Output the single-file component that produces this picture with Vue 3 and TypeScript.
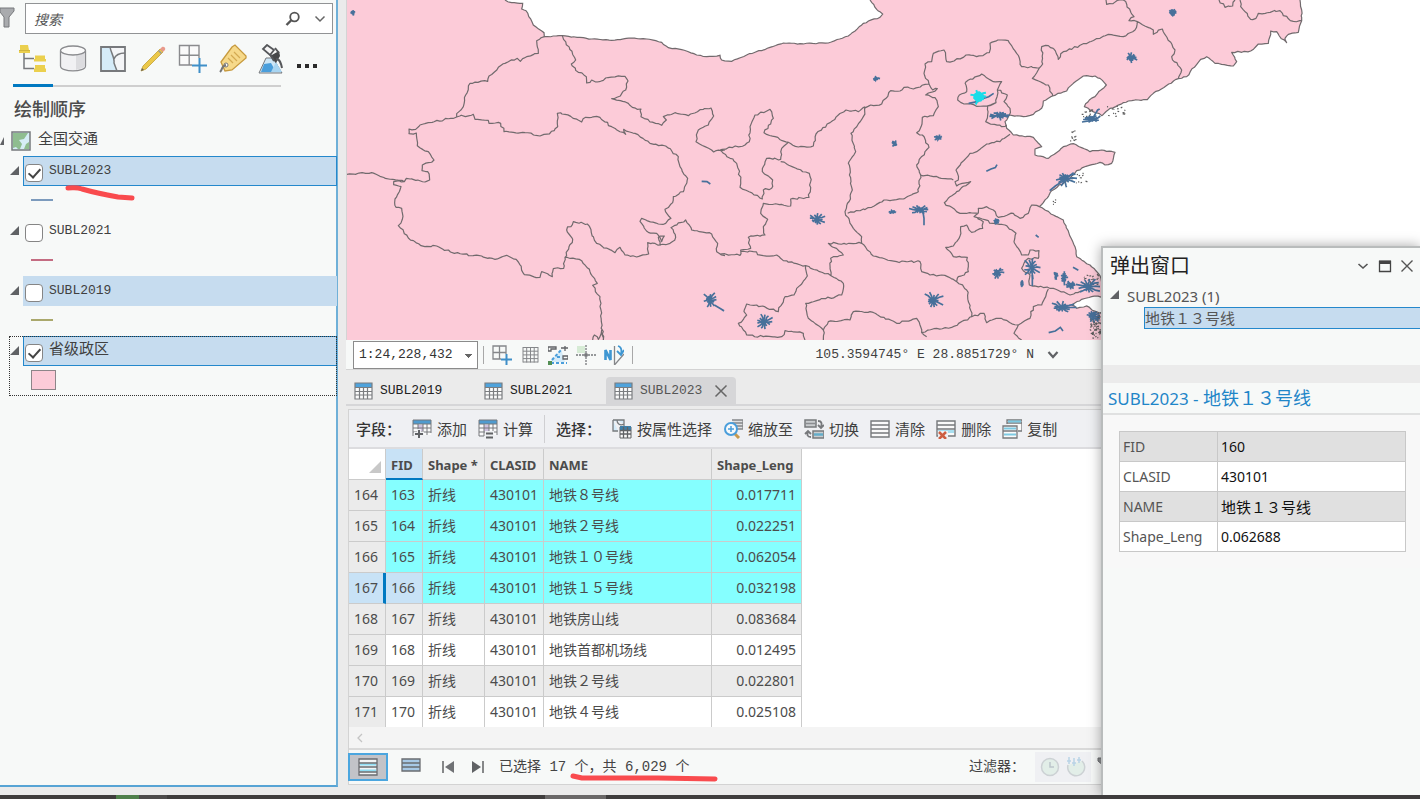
<script setup lang="ts">
import { ref } from 'vue'

interface Layer { name: string; checked: boolean; state: string; color: string; area?: boolean }
interface Row { no: number; fid: number; name: string; len: string; picked: boolean }
interface Border { dx: number; pts: string }
interface City { dx: number; x: number; y: number; w: number; h: number }

const layers = ref<Layer[]>([
  { name: 'SUBL2023', checked: true, state: 'active', color: '#7c9bbd' },
  { name: 'SUBL2021', checked: false, state: '', color: '#c46c82' },
  { name: 'SUBL2019', checked: false, state: 'soft', color: '#aaa86c' },
  { name: '省级政区', checked: true, state: 'active focus', color: '#fccbd8', area: true },
])
const tabs = ['SUBL2019', 'SUBL2021', 'SUBL2023']
const rows: Row[] = [
  { no: 164, fid: 163, name: '地铁８号线', len: '0.017711', picked: true },
  { no: 165, fid: 164, name: '地铁２号线', len: '0.022251', picked: true },
  { no: 166, fid: 165, name: '地铁１０号线', len: '0.062054', picked: true },
  { no: 167, fid: 166, name: '地铁１５号线', len: '0.032198', picked: true },
  { no: 168, fid: 167, name: '地铁房山线', len: '0.083684', picked: false },
  { no: 169, fid: 168, name: '地铁首都机场线', len: '0.012495', picked: false },
  { no: 170, fid: 169, name: '地铁２号线', len: '0.022801', picked: false },
  { no: 171, fid: 170, name: '地铁４号线', len: '0.025108', picked: false },
]
const current = 167
const attributes = [
  ['FID', '160'],
  ['CLASID', '430101'],
  ['NAME', '地铁１３号线'],
  ['Shape_Leng', '0.062688'],
]

// Map units are a third of a pixel. Each sheet of the map has its own x origin.
const WEST = -6
const MID = 1119
const EAST = 2079

let seed = 7
function rand(): number {
  seed = (seed * 16807) % 2147483647
  return seed / 2147483647 - 0.5
}
function rough(pts: string, amp: number, dx: number): string {
  const p = pts.trim().split(/\s+/).map((s) => s.split(',').map(Number))
  const out = [`M${p[0][0] + dx} ${p[0][1]}`]
  for (let i = 1; i < p.length; i++) {
    const [x0, y0] = p[i - 1]
    const [x1, y1] = p[i]
    const n = Math.max(1, Math.round(Math.hypot(x1 - x0, y1 - y0) / 9))
    for (let k = 1; k < n; k++) {
      const t = k / n
      out.push(`L${(x0 + (x1 - x0) * t + dx + rand() * amp).toFixed(1)} ${(y0 + (y1 - y0) * t + rand() * amp).toFixed(1)}`)
    }
    out.push(`L${x1 + dx} ${y1}`)
  }
  return out.join('')
}
function burst(c: City): string {
  const out: string[] = []
  for (let i = 0; i < 13; i++) {
    const a = (i / 13) * Math.PI * 2
    const r = 1.15 + rand() * 0.9
    const x = c.x + c.dx
    out.push(`M${x + rand() * 6} ${c.y + rand() * 6}L${x + Math.cos(a) * r * c.w * 0.3} ${c.y + Math.sin(a) * r * c.h * 0.35 + rand() * 5}L${x + Math.cos(a) * r * c.w * 0.5} ${c.y + Math.sin(a) * r * c.h * 0.5}`)
  }
  return out.join('')
}
function specks(x: number, y: number, w: number, h: number, n: number): string {
  const out: string[] = []
  for (let i = 0; i < n; i++) out.push(`M${x + (rand() + 0.5) * w} ${y + (rand() + 0.5) * h}l${4 + rand() * 4} ${rand() * 6}`)
  return out.join('')
}

const north = rough('480,0 500,8 533,10 530,27 543,32 565,75 597,98 598,110 652,107 740,117 800,121 860,114 905,117 950,127 970,143 1010,149 1055,165 1085,170 1125,166 1130,180 1160,184 1205,165 1275,142 1315,129 1365,131 1450,129 1510,108 1555,70 1605,52 1613,42 1595,28 1575,0', 3, WEST)
const sea = rough('1740,0 1745,30 1745,62 1735,97 1705,103 1695,115 1700,128 1678,108 1670,95 1652,93 1645,130 1615,132 1592,153 1535,157 1550,185 1540,198 1485,190 1460,170 1442,178 1400,230 1375,236 1300,280 1282,299 1225,303 1170,325 1145,347 1110,330 1093,320 1108,300 1125,290 1159,255 1140,235 1125,228 1090,228 1060,250 1040,273 998,288 970,303 965,325 940,343 910,350 868,345 855,365 860,385 880,405 940,412 965,440 945,447 945,465 985,475 1003,463 1030,440 1060,431 1110,455 1145,450 1185,457 1175,490 1155,495 1140,487 1105,497 1070,512 1050,535 995,572 970,608 958,620 1000,645 1030,660 1065,740 1070,770 1110,795 1135,820 1150,850', 4, MID)
const bay = rough('1150,890 1115,890 1085,898 1055,915 1070,925 1100,918 1120,932 1150,940', 4, MID)

const borders: Border[] = [
  { dx: WEST, pts: '598,110 575,122 580,160 545,170 526,184 517,175 490,185 460,202 432,228 428,244 375,250 362,285 355,320 335,341 335,351' },
  { dx: WEST, pts: '652,107 692,180 679,192 700,217 724,230 725,249 740,240 752,246 775,241 782,234 840,229 849,243 842,270 826,288 800,296 850,310 862,322 888,327 888,350 915,366 950,376 964,360 955,350 990,338 1030,347 1065,329 1098,324 1106,348 1090,375 1060,390 1053,425 1080,440 1106,456 1140,450' },
  { dx: WEST, pts: '335,351 385,343 390,358 430,361 432,370 467,370 477,395 540,398 585,408 613,402 638,380 637,340 660,343 710,366 722,352 755,349 800,380 842,403 836,388 870,400 915,430 962,438 1000,470 1005,500 1028,535 1015,575 985,590 983,608 960,628 978,655 962,670 940,672 890,655 885,664 910,697 935,700 950,725 958,708 940,712 945,735 975,730 992,712 978,683 1022,660 1040,690 1100,702 1118,730 1115,755 1140,767' },
  { dx: WEST, pts: '335,351 225,375 212,388 192,387 192,401 214,399 217,437 250,455 267,480 232,495 231,512 248,515 254,540 240,546 184,535 178,545 146,545 146,554 168,560 150,597 153,622 170,625 172,658 160,677 190,714 228,737 275,738 328,760 410,768 450,778 485,766 520,786 538,824 585,832 590,815 622,830 625,806 656,805 660,772 672,740 683,718 665,690 685,665 727,672 755,730 810,758 825,742 840,765 875,771 911,762 908,728 948,735' },
  { dx: WEST, pts: '6,523 80,518 105,529 178,545' },
  { dx: WEST, pts: '660,772 710,782 735,815 757,850 743,856 765,890 769,965 775,1020' },
  { dx: WEST, pts: '743,1020 748,1005 760,1018 770,990 775,1020' },
  { dx: MID, pts: '0,450 75,435 88,425 90,380 105,345 150,328 160,355 132,398 205,427 185,445 182,478 140,475 127,515 158,540 155,565 130,570 127,597 60,562 62,540 50,490 10,460 0,450' },
  { dx: MID, pts: '182,485 268,520 272,545 267,592 212,597 212,618 130,610 122,640 143,658 130,680 135,705 85,712 92,745 62,750 60,766 0,762' },
  { dx: MID, pts: '205,427 235,441 280,438 288,402 355,345 378,330 415,335 435,320' },
  { dx: MID, pts: '435,320 430,350 393,400 407,455 385,490 397,570 375,635 400,685 425,710 425,730' },
  { dx: MID, pts: '432,325 452,315 485,312 512,272 540,273 552,262 580,267 627,252 612,220 615,192 635,185 640,160 672,150 680,185 702,183 738,165 770,170 808,158 810,130 845,120 865,122 890,160 905,200 958,204 968,192 965,140 985,137 1000,145' },
  { dx: MID, pts: '627,252 638,270 652,266 617,285 645,293 655,320 640,347 607,352 606,372 590,398 607,405 627,442 590,495 602,525 640,530 700,540' },
  { dx: MID, pts: '870,403 840,425 800,432 770,455 750,460 708,510 715,540 705,545 710,558 752,545 710,575 690,590 673,608 720,640 775,640' },
  { dx: MID, pts: '602,525 595,575 550,597 492,600 455,622 383,640' },
  { dx: MID, pts: '958,204 937,235 985,255 998,288' },
  { dx: MID, pts: '735,248 785,222 820,245 845,245 832,270 828,308 790,318 732,312 713,300 718,285 740,275 735,248' },
  { dx: MID, pts: '832,270 862,285 852,305 870,325 868,345' },
  { dx: MID, pts: '828,308 803,318 803,345 797,365 845,380 860,375' },
  { dx: MID, pts: '775,640 775,625 800,620 820,630 835,652 880,640 900,655 925,640 935,615 958,620' },
  { dx: MID, pts: '775,640 762,650 820,670 855,675 888,700 882,725 895,745 905,765 925,765 930,750 957,752 955,775 925,775 905,805 930,825 928,855 1000,865 1050,885 1085,872' },
  { dx: MID, pts: '762,650 790,665 788,685 755,697 740,675 722,680 720,708 700,738 677,742 700,770 742,772 745,815 715,830 710,845 740,870 755,950' },
  { dx: MID, pts: '425,730 325,730 370,765 332,775 333,827 370,850 365,885 290,902 257,910 265,955 310,990 310,1020' },
  { dx: MID, pts: '425,730 460,768 530,785 600,785 605,815 630,825 665,825 710,845' },
  { dx: MID, pts: '62,755 100,755 130,767 170,765 190,782 257,797 333,827' },
  { dx: MID, pts: '257,797 262,828 230,865 222,885 195,890 175,935 110,915 80,912 72,935 80,945 55,970 70,990 80,1005 130,1010 185,1010 195,992 250,1000 255,1020' },
  { dx: MID, pts: '310,990 325,965 390,960 400,935 450,935 530,970 590,955 600,975 605,998 620,1010' },
  { dx: MID, pts: '605,998 650,985 695,982 755,950 792,940 800,968 835,955 895,975 930,955 940,920 965,915 985,867' },
  { dx: MID, pts: '895,975 882,1000 905,1020' },
  { dx: EAST, pts: '40,145 55,178 70,155 180,115 205,103 250,110 285,90 292,65 340,90 340,103 367,87 405,150 395,170 425,210 415,236' },
  { dx: EAST, pts: '198,0 200,13 250,0 282,50 267,62 292,65' },
  { dx: EAST, pts: '537,0 555,22 578,18 585,0' },
  { dx: EAST, pts: '600,0 602,20 632,58 648,55 655,40 720,32 730,47 760,64 785,62' },
]
const borderPath = borders.map((b) => rough(b.pts, 6, b.dx)).join('')

const cities: City[] = [
  { dx: WEST, x: 23, y: 38, w: 11, h: 10 },
  { dx: WEST, x: 1095, y: 899, w: 32, h: 32 },
  { dx: MID, x: 468, y: 236, w: 16, h: 8 },
  { dx: MID, x: 524, y: 431, w: 13, h: 12 },
  { dx: MID, x: 654, y: 413, w: 17, h: 12 },
  { dx: MID, x: 838, y: 346, w: 46, h: 20 },
  { dx: MID, x: 290, y: 658, w: 38, h: 27 },
  { dx: MID, x: 516, y: 636, w: 16, h: 8 },
  { dx: MID, x: 598, y: 629, w: 42, h: 20 },
  { dx: MID, x: 832, y: 818, w: 26, h: 24 },
  { dx: MID, x: 935, y: 803, w: 38, h: 44 },
  { dx: MID, x: 640, y: 902, w: 44, h: 38 },
  { dx: MID, x: 132, y: 965, w: 40, h: 36 },
  { dx: MID, x: 828, y: 664, w: 14, h: 10 },
  { dx: MID, x: 1008, y: 826, w: 10, h: 18 },
  { dx: MID, x: 1032, y: 832, w: 16, h: 32 },
  { dx: MID, x: 1050, y: 855, w: 26, h: 18 },
  { dx: MID, x: 1105, y: 860, w: 52, h: 38 },
  { dx: MID, x: 1025, y: 922, w: 56, h: 26 },
  { dx: MID, x: 1120, y: 948, w: 34, h: 26 },
  { dx: MID, x: 1035, y: 535, w: 46, h: 34 },
  { dx: MID, x: 906, y: 851, w: 8, h: 14 },
  { dx: EAST, x: 397, y: 38, w: 20, h: 16 },
  { dx: EAST, x: 272, y: 173, w: 30, h: 20 },
  { dx: EAST, x: 155, y: 356, w: 34, h: 14 },
]
const cityPath = cities.map(burst).join('')
const capital = burst({ dx: MID, x: 776, y: 290, w: 32, h: 32 })
const islands = specks(EAST + 200, 320, 55, 30, 16) + specks(EAST + 90, 390, 18, 35, 10) + specks(MID + 1085, 330, 40, 30, 16)
  + specks(MID + 1050, 515, 60, 40, 12) + specks(MID + 995, 600, 12, 16, 4) + specks(MID + 1108, 935, 34, 80, 80) + specks(MID + 1085, 815, 50, 40, 22)
</script>

<template>
  <div class="app">
    <div class="workspace">
      <aside class="contents">
        <div class="search-row">
          <svg class="funnel" width="18" height="22" viewBox="0 0 18 22"><path d="M0 1H14V4L9 10V20H4V10L0 5Z" fill="#a9abae" stroke="#77797c" /></svg>
          <div class="search">
            <input type="text" placeholder="搜索" aria-label="搜索" />
            <button aria-label="查找"><svg width="16" height="16" viewBox="0 0 16 16" fill="none" stroke="#555"><circle cx="9.500" cy="6" r="4.300" stroke-width="1.800" /><path d="M6.500 9L1.500 14" stroke-width="2.400" /></svg></button>
            <button aria-label="搜索选项"><svg width="12" height="8" viewBox="0 0 12 8" fill="none" stroke="#666" stroke-width="1.500"><path d="M1.500 1.500L6 6L10.500 1.500" /></svg></button>
          </div>
        </div>

        <div class="views">
          <nav class="view-list" aria-label="列出方式">
            <button class="on" aria-label="按绘制顺序列出"><svg width="30" height="30" viewBox="0 0 30 30"><path d="M6 9V24.500H16M6 14.500H16" fill="none" stroke="#77797c" stroke-width="1.500" /><path d="M2 1H10L11 6H12V9H1V6H2ZM17 11.500H27V15H28V17.500H16V15H17ZM17 21H27V24.500H28V28H16V24.500H17Z" fill="#ebd04e" /><path d="M1 6.500H12" stroke="#d0b53d" /></svg></button>
            <button aria-label="按数据源列出"><svg width="30" height="30" viewBox="0 0 30 30"><path d="M2.500 7V22C2.500 28.500 27.500 28.500 27.500 22V7" fill="#f1f1f3" stroke="#8a8b8e" stroke-width="1.300" /><path d="M18 11L27 8V23L18 26Z" fill="#dcdcdf" /><ellipse cx="15" cy="6.500" rx="12.500" ry="4.500" fill="#fafafa" stroke="#8a8b8e" stroke-width="1.300" /></svg></button>
            <button aria-label="按选择列出"><svg width="30" height="30" viewBox="0 0 30 30"><path d="M3 3H27V27H3Z" fill="#f4f5f7" /><path d="M3 3H12C13 9 17 14 16 19L19 27H3Z" fill="#d5ebf8" /><path d="M12 3C13 9 17 14 16 19L19 27M16 15C18 10 22 9 27 9" fill="none" stroke="#77797c" stroke-width="1.500" /><path d="M3 3H27V27H3Z" fill="none" stroke="#77797c" stroke-width="1.800" /></svg></button>
            <button aria-label="按编辑列出"><svg width="30" height="30" viewBox="0 0 30 30"><path d="M3 27L5 22L22 5L25 8L8 25Z" fill="#ebc84a" stroke="#c39f35" stroke-width=".8" /><path d="M22 5L24 3C26 2 28 4 27 6L25 8Z" fill="#e99a8c" /><path d="M20.500 6.500L23.500 9.500" stroke="#999" stroke-width="1.500" /><path d="M3 27L4 24L6 26Z" fill="#67645c" /></svg></button>
            <button aria-label="按捕捉列出"><svg width="30" height="30" viewBox="0 0 30 30"><path d="M1.500 1.500H21V21H1.500ZM11.200 1.500V21M1.500 11.200H21" fill="#fafafa" stroke="#8a8b8e" stroke-width="1.400" /><path d="M21.500 14V29M14 21.500H29" stroke="#f7f9f8" stroke-width="5" /><path d="M21.500 14V29M14 21.500H29" stroke="#3f8fc8" stroke-width="2" /></svg></button>
            <button aria-label="按标注列出"><svg width="30" height="30" viewBox="0 0 30 30"><path d="M3 18L14 3L17 1L28 12V14L14 26L7 27Z" fill="#f6d98a" stroke="#c79a3e" stroke-width="1.300" /><path d="M13 11L19 17M16 8L22 14M10 14L15 19" stroke="#d3aa52" stroke-width="1.200" /><circle cx="8" cy="21" r="2" fill="#fff" stroke="#777" /><path d="M8 21C3 22 5 25 2 28" fill="none" stroke="#777" stroke-width="2" /></svg></button>
            <button aria-label="按感知列出"><svg width="30" height="30" viewBox="0 0 30 30"><path d="M8 14L1 29H24L15 14Z" fill="#cde6f6" stroke="#77797c" /><path d="M6 20L3 28H18L13 19Z" fill="#4a9edb" /><path d="M13 28L18 18L24 28Z" fill="#a8d5f2" /><path d="M9 1L16 6L12 11L5 5Z" fill="#f6f6f6" stroke="#55575a" stroke-width="1.800" /><path d="M12 12L21 7L22 12L18 19Z" fill="#46484a" /><path d="M17 4L21 9M12 10L16 17M18 15C22 15 23 19 24 24" fill="none" stroke="#55575a" stroke-width="2" /></svg></button>
          </nav>
          <button class="more" aria-label="更多"><i></i><i></i><i></i></button>
        </div>

        <h1>绘制顺序</h1>
        <div class="map-row">
          <span class="tri"></span>
          <svg width="20" height="20" viewBox="0 0 20 20"><path d="M1 1H19V19H1Z" fill="#d6edf6" stroke="#77797c" stroke-width="1.500" /><path d="M2 2H17L13 8L8 9L11 13L9 18H7L5 16L2 17ZM18 11V18H13L15 13Z" fill="#8fbd90" /></svg>
          <span>全国交通</span>
        </div>
        <ul class="layers">
          <li v-for="(l, i) in layers" :key="l.name" :class="l.state">
            <span class="tri"></span>
            <div class="layer-row">
              <input :id="'layer' + i" v-model="l.checked" type="checkbox" />
              <label :for="'layer' + i">{{ l.name }}</label>
            </div>
            <div class="legend"><span :class="l.area ? 'swatch' : 'stroke'" :style="{ background: l.color }"></span></div>
          </li>
        </ul>
        <svg class="mark mark-layer" width="72" height="18" viewBox="0 0 72 18"><path d="M4 4C10 4 12 3 18 5C32 9 43 11 54 13L68 14" /></svg>
      </aside>

      <main class="stage">
        <svg class="map" viewBox="0 0 3219 1020" preserveAspectRatio="xMinYMin slice" role="img" aria-label="地图">
          <rect width="3219" height="1020" fill="#fccbd8" />
          <path :d="north" class="void" />
          <path :d="sea + 'L3400 1020V-10H2859Z'" fill="#fff" />
          <path :d="sea" class="line" />
          <path :d="bay" class="void" />
          <path :d="borderPath" class="line" />
          <path :d="islands" class="speck" />
          <path :d="cityPath" class="metro" />
          <path class="metro" d="M1727 630L1731 655V676M2108 572L2125 558L2145 545L2180 518M2105 998L2125 993L2140 982L2148 993M1119 925L1131 933M1102 915L1131 932M2205 366L2245 360L2260 348M2240 350L2252 330L2258 327M1865 310L1895 304M1902 298L1925 290L1940 280M1918 514L1932 507L1945 503L1950 494M2066 705L2075 712M2056 825V858M2178 802L2194 811M1064 544L1080 545L1090 552M1955 352L1988 345" />
          <path :d="capital" class="capital" />
          <ellipse cx="1895" cy="290" rx="16" ry="15" fill="#19dce8" />
        </svg>

        <div class="statusbar">
          <select aria-label="比例尺"><option>1:24,228,432</option></select>
          <span class="sep"></span>
          <button aria-label="捕捉格网"><svg width="20" height="20" viewBox="0 0 20 20"><path d="M1 1H14V14H1ZM7.500 1V14M1 7.500H14" fill="none" stroke="#85878a" stroke-width="1.300" /><path d="M14.500 9V20M9 14.500H20" stroke="#f7f9f8" stroke-width="4" /><path d="M14.500 9V20M9 14.500H20" stroke="#3f8fc8" stroke-width="2" /></svg></button>
          <button aria-label="格网"><svg width="20" height="20" viewBox="0 0 20 20"><path d="M3 2.500H18M3 6.200H18M3 9.900H18M3 13.600H18M3 17H18M3 2V17.500M6.700 2V17.500M10.500 2V17.500M14.200 2V17.500M18 2V17.500" stroke="#85878a" fill="none" /></svg></button>
          <button aria-label="约束"><svg width="20" height="20" viewBox="0 0 20 20"><path d="M2 17L13 4L17 17Z" fill="#d5ebf8" /><path d="M0 2H8V4H3V6H0ZM13 3H20M17 1V6M15 11H20V14H15Z" stroke="#606265" stroke-width="1.300" fill="none" /><path d="M3 18H19M4 15L13 5M9 12H14" stroke="#4a9edb" stroke-width="2" stroke-dasharray="3 2" fill="none" /><path d="M0 16H4V20H0Z" fill="#538f54" /></svg></button>
          <button aria-label="校正"><svg width="20" height="20" viewBox="0 0 20 20"><path d="M1 1H9V8H1Z" fill="#d6ebd5" /><path d="M10 0V20M0 10H20" stroke="#77797c" stroke-width="1.300" stroke-dasharray="2 1" /><circle cx="10" cy="10" r="2" fill="#77797c" /></svg></button>
          <button aria-label="指北"><svg width="20" height="20" viewBox="0 0 20 20"><path d="M1.500 15V5L6.500 15V5" fill="none" stroke="#3f97d2" stroke-width="2.600" /><path d="M10.500 1V20L20 9" fill="none" stroke="#85878a" stroke-width="1.300" /><path d="M14 1C17 2 18 5 17 9M13 6L17 10L20 5" fill="none" stroke="#3f97d2" stroke-width="1.800" /></svg></button>
          <span class="sep"></span>
          <output class="coords">105.3594745° E 28.8851729° N</output>
          <button aria-label="坐标格式"><svg width="12" height="10" viewBox="0 0 12 10"><path d="M1.500 2L6 7L10.500 2" fill="none" stroke="#606265" stroke-width="2.200" /></svg></button>
        </div>

        <div class="tabs" role="tablist">
          <div v-for="t in tabs" :key="t" class="tab" :class="{ current: t === 'SUBL2023' }">
            <button class="tab-name" role="tab" :aria-selected="t === 'SUBL2023'">
              <svg width="19" height="18" viewBox="0 0 19 18"><path d="M1 1H18V17H1Z" fill="#fbfbfb" /><path d="M1 1H18V5H1Z" fill="#4fa3dc" /><path d="M1 5.500H18M1 9.500H18M1 13H18M5.500 5V17M9.500 5V17M13.500 5V17M1 1H18V17H1Z" stroke="#7b7d80" stroke-width="1.200" fill="none" /></svg>
              <span>{{ t }}</span>
            </button>
            <button v-if="t === 'SUBL2023'" class="close" aria-label="关闭"><svg width="14" height="14" viewBox="0 0 14 14"><path d="M1.500 1.500L12.500 12.500M12.500 1.500L1.500 12.500" stroke="#666" stroke-width="1.500" /></svg></button>
          </div>
        </div>

        <section class="table-view">
          <div class="toolbar">
            <strong>字段：</strong>
            <button><svg width="20" height="20" viewBox="0 0 20 20"><path d="M1 2H19V16H1Z" fill="#fafafa" /><path d="M1 1H19V5H1Z" fill="#4f9bcf" /><path d="M6 6H11V12H6Z" fill="#cfc1df" /><path d="M1 1V17M1 1H19V14M1 9H19M1 13H19M6 5V17M11 5V12M15 5V16M1 5H19" stroke="#77797c" fill="none" /><path d="M7 10V20M2 15H12" stroke="#eff0f3" stroke-width="4" /><path d="M7 11V19M3 15H11" stroke="#606265" stroke-width="2" /></svg><span>添加</span></button>
            <button><svg width="20" height="20" viewBox="0 0 20 20"><path d="M1 2H19V16H1Z" fill="#fafafa" /><path d="M1 1H19V5H1Z" fill="#4f9bcf" /><path d="M6 6H11V12H6Z" fill="#cfc1df" /><path d="M1 1V17H6M1 1H19V16M1 9H19M1 13H19M6 5V17M11 5V12M15 5V16M1 5H19" stroke="#77797c" fill="none" /><path d="M7 12H16V20H7Z" fill="#eff0f3" /><path d="M8 14.500H15M8 18.500H15" stroke="#606265" stroke-width="2" /></svg><span>计算</span></button>
            <span class="rule"></span>
            <strong>选择：</strong>
            <button><svg width="20" height="20" viewBox="0 0 20 20"><path d="M1 1H12V7M1 1V12H6M5 1C5 5 8 7 12 5" fill="#d5ebf8" stroke="#77797c" stroke-width="1.300" /><path d="M8 8H19V19H8Z" fill="#fafafa" stroke="#606265" /><path d="M8 7H19V11H8Z" fill="#3f7fa8" /><path d="M8 11.500H19M8 15H19M11.500 8V19M15.500 8V19" stroke="#606265" stroke-width="1.300" /></svg><span>按属性选择</span></button>
            <button><svg width="20" height="20" viewBox="0 0 20 20"><path d="M9 1H20V10H12M9 4H20M12 7H20" fill="#dfe1e3" stroke="#85878a" stroke-width="1.300" /><path d="M12 15L16 19" stroke="#c79a4e" stroke-width="3" /><circle cx="8" cy="10" r="6" fill="#f7f9fa" stroke="#4a9edb" stroke-width="2" /><path d="M8 7V13M5 10H11" stroke="#4a9edb" stroke-width="1.500" /></svg><span>缩放至</span></button>
            <button><svg width="20" height="20" viewBox="0 0 20 20"><path d="M1 1H12V8H1ZM9 12H20V19H9Z" fill="#c9ccce" stroke="#77797c" stroke-width="1.500" /><path d="M2 4.500H11" stroke="#8b8d90" stroke-width="1.500" /><path d="M10 15.500H19" stroke="#63aeca" stroke-width="2.500" /><path d="M14 2C18 2 18 5 17 8M14 6L17 9L20 6M7 18C3 18 3 16 4 12M1 15L4 12L7 15" fill="none" stroke="#77797c" stroke-width="1.800" /></svg><span>切换</span></button>
            <button><svg width="20" height="20" viewBox="0 0 20 20"><path d="M1 2H19V18H1ZM1 6H19M1 10H19M1 14H19" fill="#fafafa" stroke="#77797c" stroke-width="1.400" /></svg><span>清除</span></button>
            <button><svg width="20" height="20" viewBox="0 0 20 20"><path d="M1 2H19V17H1ZM1 6H19M1 10H19" fill="#fafafa" stroke="#77797c" stroke-width="1.400" /><path d="M2 11H18V14H2Z" fill="#a8dff0" /><path d="M2 12H12V20H2Z" fill="#eff0f3" /><path d="M3 13L10 20M10 13L3 20" stroke="#cd5f42" stroke-width="2.500" /></svg><span>删除</span></button>
            <button><svg width="20" height="20" viewBox="0 0 20 20"><path d="M5 5V1H20V12H16M5 4H20" fill="#fafafa" stroke="#77797c" stroke-width="1.300" /><path d="M1 7H15V19H1Z" fill="#fafafa" stroke="#77797c" stroke-width="1.300" /><path d="M6 2.500H19M2 9.500H14M2 15.500H14" stroke="#7cc9e2" stroke-width="2" /><path d="M1 12H15" stroke="#77797c" stroke-width="1.500" /></svg><span>复制</span></button>
          </div>

          <div class="grid-wrap">
            <table class="grid">
              <colgroup><col class="c-no" /><col class="c-fid" /><col class="c-shape" /><col class="c-cls" /><col class="c-name" /><col class="c-len" /></colgroup>
              <thead>
                <tr>
                  <th class="corner" aria-label="全选"><span></span></th>
                  <th class="sorted">FID</th><th>Shape *</th><th>CLASID</th><th>NAME</th><th>Shape_Leng</th>
                </tr>
              </thead>
              <tbody>
                <tr v-for="r in rows" :key="r.no" :class="{ picked: r.picked, current: r.no === current }">
                  <th scope="row">{{ r.no }}</th>
                  <td>{{ r.fid }}</td><td>折线</td><td>430101</td><td>{{ r.name }}</td><td class="num">{{ r.len }}</td>
                </tr>
              </tbody>
            </table>
          </div>
          <div class="hscroll"><button aria-label="向左滚动"><svg width="8" height="10" viewBox="0 0 8 10"><path d="M6 1L2 5L6 9" fill="none" stroke="#c4c4c4" stroke-width="1.300" /></svg></button></div>

          <div class="footer">
            <button class="mode on" aria-label="显示所有记录"><svg width="20" height="18" viewBox="0 0 20 18"><path d="M1 1H19V17H1Z" fill="#f2f4f5" /><path d="M2 6.500H18M2 12.500H18" stroke="#8edcf2" stroke-width="2" /><path d="M1 1H19V17H1ZM1 5H19M1 9H19M1 14H19" fill="none" stroke="#6a6c70" stroke-width="1.300" /></svg></button>
            <button class="mode" aria-label="显示所选记录"><svg width="20" height="18" viewBox="0 0 20 18"><path d="M1 1H19V13H1Z" fill="#a7c8e6" /><path d="M1 1H19V13H1ZM1 5H19M1 9H19" fill="none" stroke="#6a6c70" stroke-width="1.300" /></svg></button>
            <button class="step" aria-label="第一条"><svg width="13" height="14" viewBox="0 0 13 14"><path d="M1 1V13" stroke="#606265" stroke-width="1.500" /><path d="M12 1V13L3 7Z" fill="#707275" /></svg></button>
            <button class="step" aria-label="最后一条"><svg width="13" height="14" viewBox="0 0 13 14"><path d="M12 1V13" stroke="#606265" stroke-width="1.500" /><path d="M1 1V13L10 7Z" fill="#606265" /></svg></button>
            <span class="count">已选择 17 个，共 6,029 个</span>
            <span class="filter-label">过滤器：</span>
            <span class="filters">
              <button aria-label="时间过滤器" disabled><svg width="20" height="20" viewBox="0 0 20 20"><circle cx="10" cy="10" r="8.500" fill="#e2eee8" stroke="#ccd1d4" stroke-width="1.500" /><path d="M10 5V10H14" fill="none" stroke="#bcc5ca" stroke-width="1.500" /></svg></button>
              <button aria-label="范围过滤器" disabled><svg width="20" height="20" viewBox="0 0 20 20"><path d="M16 4A8.500 8.500 0 1 1 2 8" fill="#e2eee8" stroke="#ccd1d4" stroke-width="1.500" /><path d="M3 0V7M8 1V9M13 0V6M1 4H5M6 6H10M11 3H15" stroke="#b9d3e6" stroke-width="1.500" /></svg></button>
            </span>
            <svg class="funnel" width="20" height="20" viewBox="0 0 20 20"><path d="M1 1H19V4L12 10V18H8V10L1 4Z" fill="#8a8c8f" stroke="#6c6e71" /></svg>
            <svg class="mark mark-count" width="152" height="12" viewBox="0 0 152 12"><path d="M5 4L14 6H90L147 7" /></svg>
          </div>
        </section>
      </main>

      <section class="popup" aria-label="弹出窗口">
        <header>
          <h2>弹出窗口</h2>
          <button aria-label="菜单"><svg width="14" height="14" viewBox="0 0 14 14"><path d="M2.500 5L7 9L11.500 5" fill="none" stroke="#555" stroke-width="1.600" /></svg></button>
          <button aria-label="最大化"><svg width="14" height="14" viewBox="0 0 14 14"><path d="M1.500 2.500H12.500V12.500H1.500Z" fill="none" stroke="#444" stroke-width="1.300" /><path d="M1 1.500H13V5H1Z" fill="#444" /></svg></button>
          <button aria-label="关闭"><svg width="14" height="14" viewBox="0 0 14 14"><path d="M1.500 1.500L12.500 12.500M12.500 1.500L1.500 12.500" stroke="#555" stroke-width="1.400" /></svg></button>
        </header>
        <div class="results">
          <div class="result-head"><span class="tri"></span>SUBL2023 (1)</div>
          <button class="result">地铁１３号线</button>
        </div>
        <h3><span>SUBL2023 - </span>地铁１３号线</h3>
        <div class="detail">
          <table>
            <tbody>
              <tr v-for="[k, v] in attributes" :key="k"><th scope="row">{{ k }}</th><td :class="{ cjk: k === 'NAME' }">{{ v }}</td></tr>
            </tbody>
          </table>
        </div>
      </section>
    </div>
    <footer class="taskbar"><span class="task green"></span><span class="task dim"></span><span class="task window"></span></footer>
  </div>
</template>

<style>
html, body { margin: 0; overflow: hidden; }
</style>

<style scoped>
* { box-sizing: border-box; }
button { appearance: none; border: 0; margin: 0; padding: 0; background: none; color: inherit; font: inherit; display: flex; align-items: center; justify-content: center; flex: none; }
svg { display: block; flex: none; }
h1, h2, h3, ul { margin: 0; padding: 0; font-weight: 400; }

.app { height: 100vh; display: flex; flex-direction: column; background: #ebebeb; color: #404040; font: 13px/20px "Liberation Mono", "Noto Sans CJK SC", monospace; }
.workspace { flex: 1; min-height: 0; display: flex; gap: 8px; position: relative; overflow: hidden; }

.contents { flex: none; width: 338px; margin-bottom: 8px; background: #f7f9f8; border-right: 2px solid #6fb0d8; border-bottom: 2px solid #57a4d5; position: relative; }
.search-row { display: flex; padding: 3px 3px 0 0; gap: 7px; }
.funnel { margin-top: 4px; }
.search { flex: 1; height: 31px; display: flex; align-items: center; gap: 13px; padding: 0 6px 0 8px; background: #fff; border: 1px solid #919395; }
.search input { flex: 1; min-width: 0; border: 0; padding: 0; outline: 0; background: none; font: italic 14px/20px "Noto Sans CJK SC", sans-serif; }
.search input::placeholder { color: #555; opacity: 1; }
.views { display: flex; align-items: flex-start; padding: 10px 0 0 13px; }
.view-list { display: flex; flex: none; width: 268px; height: 43px; border-bottom: 2px solid #cfcfcf; }
.view-list button { width: 40px; height: 43px; padding-bottom: 11px; border-bottom: 3px solid transparent; }
.view-list .on { border-color: #0079c1; }
.more { gap: 4px; margin: 20px 0 0 16px; }
.more i { width: 4px; height: 4px; background: #2b2b2b; }
h1 { margin: 7px 0 0 14px; font: 500 18px/28px "Noto Sans CJK SC", sans-serif; color: #4c4c4c; }
.map-row { display: flex; align-items: center; height: 34px; padding-top: 3px; font-size: 15px; gap: 7px; }
.map-row .tri { width: 4px; border-left-width: 4px; border-bottom-width: 8px; }
.tri { flex: none; width: 0; height: 0; border-left: 9px solid transparent; border-bottom: 9px solid #606265; }
.layers { list-style: none; }
.layers li { height: 60px; padding-left: 23px; position: relative; }
.layers li .tri { position: absolute; left: 10px; top: 10px; }
.layer-row { height: 30px; display: flex; align-items: center; gap: 6px; padding-left: 1px; border: 1px solid transparent; margin-right: -1px; }
.active .layer-row { background: #c6dcef; border-color: #2488cc; }
.soft .layer-row { background: #c6dcef; }
.focus::after { content: ""; position: absolute; inset: 0 -1px 0 9px; border: 1px dotted #333; pointer-events: none; }
.layer-row input { appearance: none; flex: none; width: 18px; height: 18px; margin: 3px 0 0; background: #fff; border: 1px solid #858585; border-radius: 4px; position: relative; }
.layer-row input:checked::after { content: ""; position: absolute; left: 5px; top: 1px; width: 5px; height: 10px; border: solid #444; border-width: 0 2px 2px 0; transform: rotate(42deg); }
.focus label { font-size: 15px; }
.legend { padding-left: 8px; height: 28px; display: flex; align-items: center; }
.stroke { width: 22px; height: 2px; }
.swatch { width: 25px; height: 20px; border: 1px solid #8d8589; }
.mark { position: absolute; pointer-events: none; fill: none; stroke: #f94b4e; stroke-width: 5; stroke-linecap: round; stroke-linejoin: round; }
.mark-layer { left: 64px; top: 184px; }

.stage { flex: 1; min-width: 0; display: flex; flex-direction: column; }
.map { width: 100%; height: 340px; background: #fff; border-left: 1px solid #d4d4d4; }
.map .line { fill: none; stroke: #716a6d; stroke-width: 3.600; stroke-linejoin: round; }
.map .void { fill: #fff; stroke: #716a6d; stroke-width: 3.600; }
.map .speck { fill: none; stroke: #5c5c5c; stroke-width: 3.500; }
.map .metro { fill: none; stroke: #47709a; stroke-width: 5; }
.map .capital { fill: none; stroke: #19dce8; stroke-width: 6; }
.statusbar { height: 30px; display: flex; align-items: center; gap: 8px; padding: 0 361px 0 7px; background: #f7f9f8; border-bottom: 1px solid #d3d3d3; }
.statusbar select { appearance: none; width: 125px; height: 28px; margin-right: -3px; padding: 0 5px; border: 1px solid #8b8b8b; border-radius: 0; font: inherit; color: #333; background: linear-gradient(#666, #666) right 5px top 12px / 7px 1px no-repeat, linear-gradient(#666, #666) right 6px top 13px / 5px 1px no-repeat, linear-gradient(#666, #666) right 7px top 14px / 3px 1px no-repeat, linear-gradient(#666, #666) right 8px top 15px / 1px 1px no-repeat, #fff; }
.sep { width: 1px; height: 18px; background: #a8a8a8; }
.coords { margin-left: auto; margin-right: 5px; }
.tabs { height: 36px; display: flex; align-items: flex-end; border-bottom: 2px solid #d6d6d8; }
.tab { width: 130px; height: 27px; display: flex; align-items: center; padding-left: 8px; gap: 12px; color: #222; }
.tab.current { background: #d6d6d8; border-radius: 4px 4px 0 0; color: #555; }
.tab-name { gap: 7px; }

.table-view { flex: 1; min-height: 0; margin: 3px 0 10px 2px; display: flex; flex-direction: column; border: 1px solid #d3d3d3; border-right: 0; background: #fff; }
.toolbar { flex: none; height: 39px; display: flex; align-items: center; gap: 11px; padding-left: 7px; background: #eff0f3; border-bottom: 2px solid #dcdcdf; font: 15px/20px "Noto Sans CJK SC", sans-serif; }
.toolbar strong { font-weight: 500; color: #333; }
.toolbar button { gap: 5px; }
.rule { width: 1px; height: 28px; background: #cfcfd2; }
.grid-wrap { flex: 1; min-height: 0; overflow: hidden; }
.grid { width: 453px; table-layout: fixed; border-spacing: 0; font: 14px/20px "Noto Sans", "Noto Sans CJK SC", sans-serif; color: #4c4c4c; }
.c-no { width: 37px; } .c-fid { width: 37px; } .c-shape { width: 62px; } .c-cls { width: 59px; } .c-name { width: 168px; } .c-len { width: 90px; }
.grid tr { height: 31px; }
.grid th, .grid td { padding: 0 5px; white-space: nowrap; text-align: left; border-right: 1px solid #cbcbcb; border-bottom: 1px solid #cbcbcb; }
.grid thead th { background: #ebebeb; font-size: 13px; font-weight: 700; padding-top: 2px; }
.grid thead .corner { background: #fff; padding: 6px 4px 0 0; }
.corner span { display: block; margin-left: auto; width: 0; border-left: 12px solid transparent; border-bottom: 12px solid #c8c8c8; }
.grid thead .sorted { background: #c8e2f6; border-bottom: 2px solid #0079c1; }
.grid tbody th { background: #ebebeb; font-weight: 400; }
.grid tbody tr:nth-child(odd) td { background: #ebebeb; }
.grid tbody .picked td, .grid tbody .picked:nth-child(odd) td { background: #85ffff; }
.grid tbody .current th, .grid tbody .current td:nth-child(2) { background: #c8e2f6; }
.grid tbody .current th { border-right: 3px solid #0079c1; }
.grid .num { text-align: right; }
.hscroll { flex: none; height: 23px; display: flex; align-items: center; padding-left: 7px; background: #f4f4f4; border-bottom: 2px solid #d9d9d9; }
.footer { flex: none; height: 34px; display: flex; align-items: center; background: #f7f9f8; padding-right: 303px; position: relative; color: #444; }
.mode { width: 40px; height: 28px; margin-right: 3px; border: 2px solid transparent; }
.mode.on { margin-left: -1px; background: #c2c3c8; border-color: #4ba6df; }
.step { width: 29px; }
.count { margin-left: 7px; font-size: 14px; }
.filter-label { margin-left: auto; font-size: 14px; }
.filters { display: flex; gap: 6px; padding: 0 5px; margin: 0 6px 0 10px; height: 30px; background: #eff0f3; }
.footer .funnel { margin: 0; }
.mark-count { left: 219px; top: 22px; }

.popup { position: absolute; top: 246px; right: 0; bottom: 0; width: 319px; background: #f7f9f8; border: 1px solid #b9bcbc; border-width: 2px 0 0 2px; box-shadow: 0 0 12px rgba(0, 0, 0, .35); font: 14px/20px "Noto Sans", "Noto Sans CJK SC", sans-serif; color: #555; }
.popup header { display: flex; align-items: center; gap: 8px; height: 36px; padding: 0 6px 0 7px; }
h2 { flex: 1; font-size: 20px; line-height: 28px; color: #222; }
.results { height: 81px; padding-top: 1px; }
.result-head { display: flex; align-items: center; gap: 8px; padding-left: 7px; height: 22px; font-size: 15px; }
.result-head .tri { margin-bottom: 4px; }
.result { width: calc(100% - 41px); height: 22px; margin-left: 41px; justify-content: flex-start; background: #c6dcef; border: 1px solid #2488cc; border-right: 0; font-size: 15px; line-height: 18px; }
h3 { border-top: 18px solid #ebebeb; border-bottom: 2px solid #e0e1e1; height: 50px; padding-left: 5px; font-size: 18px; line-height: 30px; color: #1f86c8; white-space: pre; }
h3 span { font-size: 17px; }
.detail { padding: 16px 14px 16px 16px; background: #f8f8f8; }
.detail table { width: 100%; table-layout: fixed; border-collapse: collapse; }
.detail tr { height: 30px; background: #fff; }
.detail tr:nth-child(odd) { background: #e0e0e0; }
.detail th, .detail td { padding: 0 3px; border: 1px solid #c8c8c8; text-align: left; font-weight: 400; }
.detail th { width: 98px; }
.detail td { color: #111; }
.detail .cjk { font-size: 15px; }

.taskbar { flex: none; height: 4px; display: flex; background: #3f3d3d; padding-left: 116px; }
.task { width: 28px; }
.green { width: 23px; background: #4f7f4b; }
.dim { background: #4d4b4b; }
.window { width: 61px; margin-left: 378px; background: #6a6868; }
</style>
